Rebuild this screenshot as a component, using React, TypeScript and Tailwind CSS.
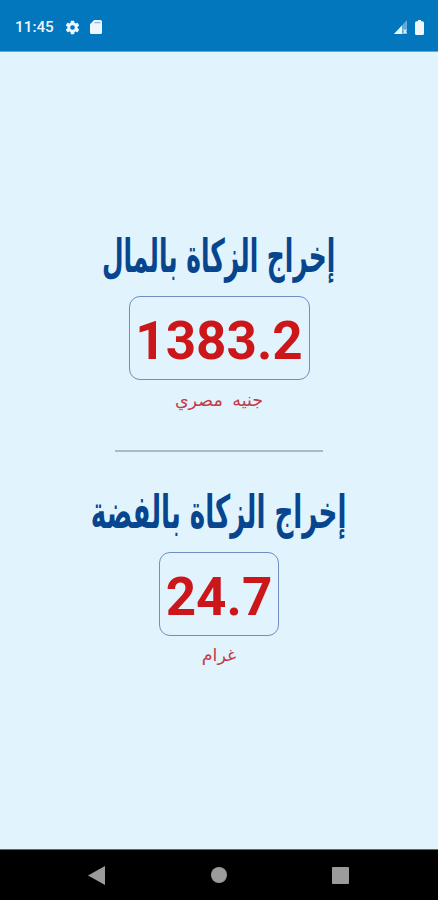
import React from 'react';

const StatusBar = () => {
  return (
    <header className="flex h-[52px] w-full items-center justify-between border-b border-[#5fa9d8] bg-[#0277bd] pt-[3px] pr-[14px] pl-[15px] text-[#eef6fc]">
      <div className="flex items-center">
        <span className="w-[39px] whitespace-nowrap pt-px font-['Roboto',sans-serif] text-[15.3px] font-medium">11:45</span>
        <svg className="ml-[10px] h-[17px] w-[17px]" viewBox="0 0 24 24" fill="currentColor">
          <path d="M19.14 12.94c.04-.3.06-.61.06-.94s-.02-.64-.07-.94l2.03-1.58a.49.49 0 0 0 .12-.61l-1.92-3.32a.49.49 0 0 0-.59-.22l-2.39.96c-.5-.38-1.03-.7-1.62-.94l-.36-2.54a.48.48 0 0 0-.48-.41h-3.84a.47.47 0 0 0-.47.41l-.36 2.54c-.59.24-1.13.57-1.62.94l-2.39-.96a.48.48 0 0 0-.59.22L2.74 8.87a.48.48 0 0 0 .12.61l2.03 1.58c-.05.3-.09.63-.09.94s.02.64.07.94l-2.03 1.58a.49.49 0 0 0-.12.61l1.92 3.32c.12.22.37.29.59.22l2.39-.96c.5.38 1.03.7 1.62.94l.36 2.54c.05.24.24.41.48.41h3.84c.24 0 .44-.17.47-.41l.36-2.54c.59-.24 1.13-.56 1.62-.94l2.39.96c.22.08.47 0 .59-.22l1.92-3.32a.48.48 0 0 0-.12-.61zM12 15.3a3.3 3.3 0 1 1 0-6.6 3.3 3.3 0 0 1 0 6.6z" />
        </svg>
        <svg className="ml-[9px] h-[14px] w-[12px]" viewBox="0 0 12 14">
          <path d="M4.2 0H10.5Q12 0 12 1.5V12.5Q12 14 10.5 14H1.5Q0 14 0 12.5V4.2Z" fill="currentColor" />
          <path d="M4.4 2.6H10.4" stroke="#8fc0e1" strokeWidth="1.4" />
        </svg>
      </div>
      <div className="flex items-center">
        <svg className="h-[14px] w-[13px]" viewBox="0 0 13 14">
          <path d="M13 0V14H0Z" fill="#62aad8" />
          <path d="M8 5.4V14H0Z" fill="currentColor" />
          <path d="M9.5 9.5L12.5 13.5M12.5 9.5L9.5 13.5" stroke="currentColor" strokeWidth="1.2" />
        </svg>
        <svg className="ml-[8px] h-[15px] w-[9px]" viewBox="0 0 9 15" fill="currentColor">
          <path d="M3 0H6V1.3H7.5Q9 1.5 9 3V13.5Q9 15 7.5 15H1.5Q0 15 0 13.5V3Q0 1.5 1.5 1.3H3Z" />
        </svg>
      </div>
    </header>
  );
};

const Amount = ({ value, className }: { value: string; className: string }) => {
  return (
    <div
      className={`flex h-[84px] items-center justify-center rounded-[11px] border border-[#6f8fc0] pt-[7px] font-['Roboto',sans-serif] text-[53px] font-bold text-[#cb1719] ${className}`}
    >
      {value}
    </div>
  );
};

const NavigationBar = () => {
  return (
    <footer className="flex h-[51px] w-full items-center justify-between border-t border-[#5c6b70] bg-black pr-[89px] pl-[88px] text-[#9b9b9b]">
      <svg className="h-[19px] w-[17px]" viewBox="0 0 17 19" fill="currentColor">
        <path d="M0 9.5L17 0V19Z" />
      </svg>
      <div className="h-4 w-4 rounded-full bg-[#9b9b9b]" />
      <div className="h-[17px] w-[17px] rounded-[1px] bg-[#9b9b9b]" />
    </footer>
  );
};

const App = () => {
  return (
    <div className="flex h-[900px] w-[438px] flex-col overflow-hidden bg-[#e1f3fd]">
      <StatusBar />
      <main className="flex flex-1 flex-col items-center">
        <h1 dir="rtl" className="mt-[177px] flex h-[52px] items-center whitespace-nowrap font-['DejaVu_Sans',sans-serif] text-[30px] font-bold text-[#07458f]">
          <span className="inline-block scale-x-[0.83] scale-y-[1.54]">إخراج الزكاة بالمال</span>
        </h1>
        <Amount value="1383.2" className="mt-[15px] w-[181px]" />
        <p dir="rtl" className="mt-[5px] h-[30px] whitespace-nowrap font-['DejaVu_Sans',sans-serif] text-[17.5px] leading-[30px] [word-spacing:4px] text-[#c43b46]">
          جنيه مصري
        </p>
        <div className="mt-[35px] h-[2px] w-[208px] bg-[#a9bcc5]" />
        <h1 dir="rtl" className="mt-[33px] flex h-[52px] items-center whitespace-nowrap font-['DejaVu_Sans',sans-serif] text-[30px] font-bold text-[#07458f]">
          <span className="inline-block scale-x-[0.872] scale-y-[1.54]">إخراج الزكاة بالفضة</span>
        </h1>
        <Amount value="24.7" className="mt-[15px] w-[120px]" />
        <p dir="rtl" className="mt-[4px] h-[30px] whitespace-nowrap font-['DejaVu_Sans',sans-serif] text-[17.5px] leading-[30px] text-[#c43b46]">
          غرام
        </p>
      </main>
      <NavigationBar />
    </div>
  );
};

export default App;
